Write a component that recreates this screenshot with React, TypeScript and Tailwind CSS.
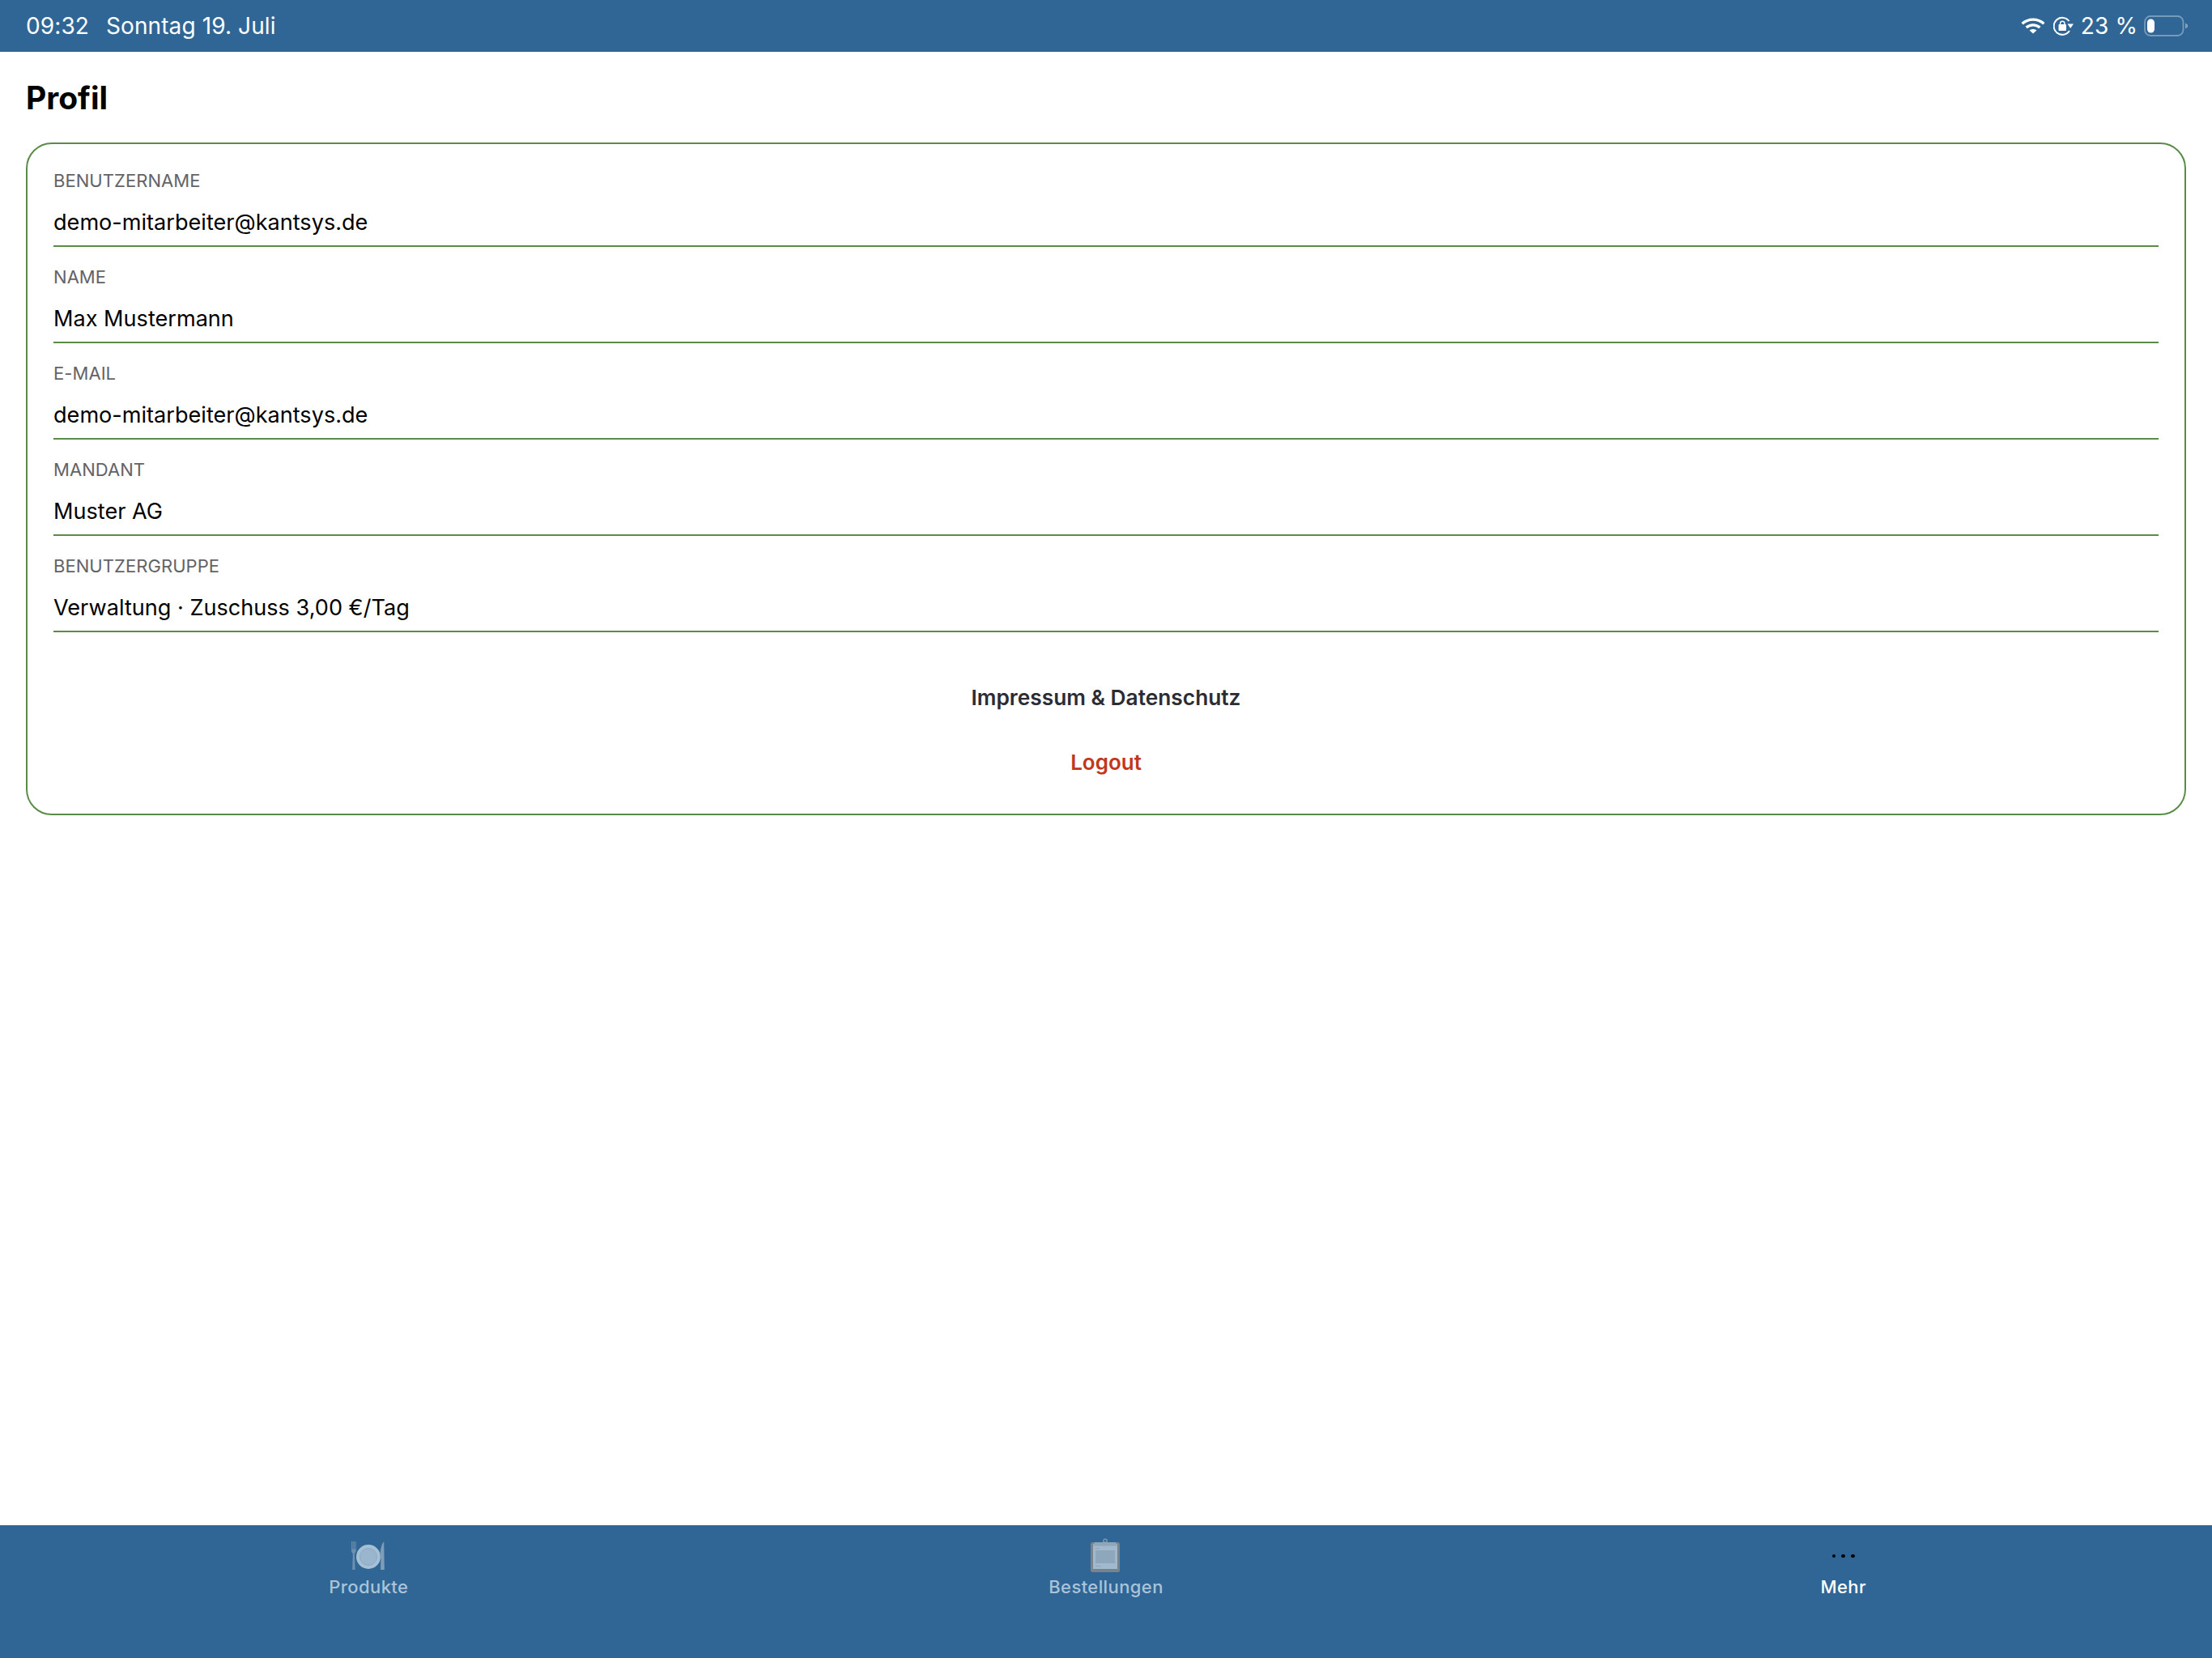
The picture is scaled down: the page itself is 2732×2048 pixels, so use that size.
import React from "react";

const rows = [
  ["BENUTZERNAME", "demo-mitarbeiter@kantsys.de"],
  ["NAME", "Max Mustermann"],
  ["E-MAIL", "demo-mitarbeiter@kantsys.de"],
  ["MANDANT", "Muster AG"],
  ["BENUTZERGRUPPE", "Verwaltung · Zuschuss 3,00 €/Tag"],
];

function Wifi() {
  return (
    <svg width="30" height="20" viewBox="0 0 30 20" fill="none" stroke="#fff" strokeWidth="3.4">
      <path d="M1.6 7.2C9.2 0.4 20.8 0.4 28.4 7.2" />
      <path d="M6.6 12C11.4 7.8 18.6 7.8 23.4 12" />
      <path d="M15 19.6 10.6 15.4C13 13.4 17 13.4 19.4 15.4Z" fill="#fff" stroke="none" />
    </svg>
  );
}

function RotationLock() {
  return (
    <svg width="25" height="24" viewBox="0 0 25 24" fill="none">
      <path d="M19.5 6A10.5 10.5 0 1 0 20 18" stroke="#fff" strokeWidth="2" />
      <path d="M17.5 9.5H25L21.2 15Z" fill="#fff" />
      <rect x="6.5" y="10" width="9.5" height="8" rx="1" fill="#fff" />
      <path d="M8.6 10.5V8.5a2.7 2.7 0 0 1 5.3 0v2" stroke="#fff" strokeWidth="1.4" />
    </svg>
  );
}

function Battery() {
  return (
    <svg width="54" height="26" viewBox="0 0 54 26" fill="none">
      <rect x="1" y="1" width="47.5" height="24" rx="7" stroke="#fff" strokeOpacity="0.35" strokeWidth="1.8" />
      <rect x="4" y="4.5" width="9" height="17" rx="4.5" fill="#fff" />
      <path d="M51 9.5 54 11.5V14.5L51 16.5Z" fill="#fff" fillOpacity="0.4" />
    </svg>
  );
}

function Plate() {
  return (
    <svg width="44" height="38" viewBox="0 0 44 38">
      <g fill="#6f90ad">
        <rect x="1" y="1" width="0.9" height="10" />
        <rect x="2.6" y="1" width="0.9" height="10" />
        <rect x="4.2" y="1" width="0.9" height="10" />
        <rect x="5.8" y="1" width="0.9" height="10" />
      </g>
      <path d="M1 10.5H6.7V13C6.7 14.6 5.2 15.2 5 16.5L5.6 36H2.2L2.8 16.5C2.6 15.2 1 14.6 1 13Z" fill="#6f90ad" />
      <circle cx="22" cy="20" r="15" fill="#a6c0d6" />
      <circle cx="22" cy="20" r="10.5" fill="#9ab6ce" stroke="#8eaac3" strokeWidth="1" />
      <path d="M37 36 37.4 22 36.4 20.5C36.4 12 38 4.5 41.2 1L41.8 36Z" fill="#7d9db9" />
    </svg>
  );
}

function Clipboard() {
  return (
    <svg width="38" height="44" viewBox="0 0 38 44">
      <rect x="0" y="5" width="36" height="37" rx="2.5" fill="#77848c" />
      <rect x="3" y="7" width="30" height="31" fill="#a2b9cd" />
      <path d="M5 5H31L33 9.5H3Z" fill="#8fa6b9" />
      <circle cx="18" cy="3.2" r="2.2" fill="none" stroke="#8fa6b9" strokeWidth="1.2" />
      <g fill="#8ea7bd">
        <rect x="6" y="15" width="24" height="16" />
        <rect x="6" y="12" width="5" height="1" />
        <rect x="6" y="34" width="7" height="1" />
      </g>
    </svg>
  );
}

function Dots() {
  return (
    <div className="flex items-center gap-[7.2px] h-[38px]">
      <span className="w-[4.5px] h-[4.5px] rounded-full bg-black" />
      <span className="w-[4.5px] h-[4.5px] rounded-full bg-black" />
      <span className="w-[4.5px] h-[4.5px] rounded-full bg-black" />
    </div>
  );
}

function Tab({ icon, label, active }: { icon: React.ReactNode; label: string; active?: boolean }) {
  return (
    <div className="flex-1 flex flex-col items-center">
      <div className="h-[46px] flex items-center justify-center">{icon}</div>
      <div className={`text-[22px] leading-[30px] font-medium tracking-[0.4px] ${active ? "text-white" : "text-[#abc3d8]"}`}>{label}</div>
    </div>
  );
}

export default function App() {
  return (
    <div className="w-[2732px] h-[2048px] bg-white flex flex-col overflow-hidden font-['Inter',sans-serif]">
      <div className="h-[64px] bg-[#2f6695] flex items-center justify-between pl-[32px] pr-[30px] text-white text-[28px] tracking-[0.1px] shrink-0">
        <div className="flex gap-[21px]">
          <span>09:32</span>
          <span>Sonntag 19. Juli</span>
        </div>
        <div className="flex items-center">
          <Wifi />
          <span className="ml-[10px]"><RotationLock /></span>
          <span className="ml-[9px] mr-[8px]">23 %</span>
          <Battery />
        </div>
      </div>
      <div className="flex-1 px-[32px]">
        <h1 className="text-[39px] leading-[48px] font-bold text-black mt-[33px] mb-[31px]">Profil</h1>
        <div className="border-2 border-[#5a8c48] rounded-[32px] px-[32px] pt-[8px] h-[831px]">
          {rows.map(([label, value]) => (
            <div key={label} className="h-[119px] pt-[23px] border-b-2 border-[#5a8c48] flex flex-col">
              <div className="text-[22px] leading-[28px] tracking-[0.06px] text-[#636366] mb-[16px]">{label}</div>
              <div className="text-[27.1px] leading-[44px] text-black">{value}</div>
            </div>
          ))}
          <div className="mt-[63px] text-center text-[26.3px] leading-[36px] font-semibold text-[#2c2c34]">Impressum &amp; Datenschutz</div>
          <div className="mt-[44px] text-center text-[26px] leading-[36px] font-semibold text-[#c1371b]">Logout</div>
        </div>
      </div>
      <div className="h-[164px] bg-[#2f6695] flex pt-[15px] shrink-0">
        <Tab icon={<Plate />} label="Produkte" />
        <Tab icon={<Clipboard />} label="Bestellungen" />
        <Tab icon={<Dots />} label="Mehr" active />
      </div>
    </div>
  );
}
